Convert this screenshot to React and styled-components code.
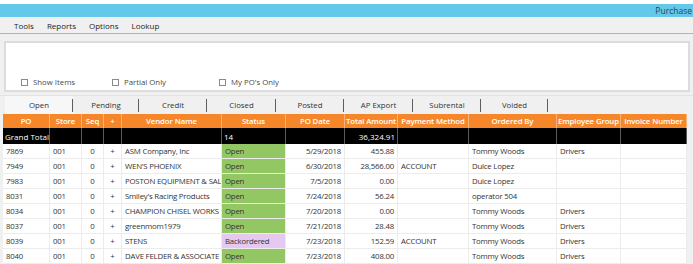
import React from "react";
import styled, { createGlobalStyle } from "styled-components";

const Global = createGlobalStyle`
  html, body { margin: 0; padding: 0; background: #ffffff; }
  body { font-family: "Open Sans", "Noto Sans", sans-serif; }
  * { box-sizing: border-box; }
`;

const Window = styled.div`
  width: 693px;
  height: 264px;
  overflow: hidden;
  background: #f0f0f0;
  border-top: 4px solid #ffffff;
  display: flex;
  flex-direction: column;
  font-size: 7.5px;
  color: #2b2b2b;
`;

const TitleBar = styled.div`
  height: 13px;
  flex: none;
  background: #64c9e9;
  display: flex;
  align-items: center;
  justify-content: flex-end;
  padding-right: 1px;
  white-space: nowrap;
  overflow: hidden;
  font-size: 8.5px;
  color: #2e4454;
`;

const MenuBar = styled.div`
  height: 17px;
  flex: none;
  display: flex;
  align-items: center;
  gap: 13px;
  padding: 1px 0 0 14px;
  font-size: 8px;
  color: #1e1e1e;
  border-bottom: 1px solid #b4b4b4;
`;

const FilterPanel = styled.div`
  margin: 7px 3px 0 4px;
  height: 51px;
  flex: none;
  background: #ffffff;
  border: 2px solid #dcdcdc;
  display: flex;
  align-items: flex-end;
  padding: 0 0 3px 15px;
`;

const CheckItem = styled.label`
  display: flex;
  align-items: center;
  gap: 5px;
  width: ${(p) => p.$w}px;
  color: #4a4a4a;
  font-size: 7.8px;
`;

const Box = styled.span`
  width: 7px;
  height: 7px;
  border: 1px solid #8a8a8a;
  background: #fff;
  flex: none;
`;

const TabStrip = styled.div`
  margin-top: 3px;
  height: 19px;
  flex: none;
  display: flex;
  align-items: stretch;
  padding-left: 5px;
  border-top: 1px solid #e2e2e2;
`;

const Tab = styled.div`
  width: ${(p) => p.$w}px;
  display: flex;
  align-items: center;
  justify-content: center;
  font-size: 7.8px;
  color: #333;
  background: ${(p) => (p.$active ? "#f7f7f7" : "transparent")};
  position: relative;
  &::after {
    content: "";
    position: absolute;
    right: 0;
    top: 3px;
    bottom: 2px;
    width: 1px;
    background: #5e5e5e;
  }
`;

const Grid = styled.div`
  margin-left: 3px;
  width: 684px;
  display: grid;
  grid-template-columns: 47px 32px 22px 18px 100px 64px 59px 53px 71px 88px 64px 66px;
  background: #ffffff;
`;

const HeadCell = styled.div`
  height: 14px;
  background: #f6862a;
  color: #ffffff;
  font-weight: 600;
  font-size: 7.8px;
  letter-spacing: -0.1px;
  display: flex;
  align-items: center;
  justify-content: center;
  white-space: nowrap;
  overflow: hidden;
  border-right: 1px solid #f9b277;
`;

const TotalCell = styled.div`
  height: 16px;
  background: #000000;
  color: #ffffff;
  font-size: 8px;
  display: flex;
  align-items: center;
  justify-content: ${(p) => (p.$right ? "flex-end" : "flex-start")};
  padding: 0 2px;
  border-right: 1px solid #5a5a5a;
  white-space: nowrap;
`;

const Cell = styled.div`
  height: 15px;
  display: flex;
  align-items: center;
  justify-content: ${(p) =>
    p.$align === "right" ? "flex-end" : p.$align === "center" ? "center" : "flex-start"};
  padding: 0 3px;
  white-space: nowrap;
  overflow: hidden;
  font-size: 7.8px;
  letter-spacing: -0.2px;
  color: #333333;
  background: ${(p) =>
    p.$status === "Open" ? "#93c764" : p.$status === "Backordered" ? "#e6c9f0" : "#ffffff"};
  border-right: 1px solid #ececec;
  border-bottom: 1px solid #ececec;
`;

const columns = [
  "PO",
  "Store",
  "Seq",
  "+",
  "Vendor Name",
  "Status",
  "PO Date",
  "Total Amount",
  "Payment Method",
  "Ordered By",
  "Employee Group",
  "Invoice Number",
];

const rows = [
  ["7869", "ASM Company, Inc", "Open", "5/29/2018", "455.88", "", "Tommy Woods", "Drivers"],
  ["7949", "WEN'S PHOENIX", "Open", "6/30/2018", "28,566.00", "ACCOUNT", "Dulce Lopez", ""],
  ["7983", "POSTON EQUIPMENT & SAL", "Open", "7/5/2018", "0.00", "", "Dulce Lopez", ""],
  ["8031", "Smiley's Racing Products", "Open", "7/24/2018", "56.24", "", "operator 504", ""],
  ["8034", "CHAMPION CHISEL WORKS", "Open", "7/20/2018", "0.00", "", "Tommy Woods", "Drivers"],
  ["8037", "greenmom1979", "Open", "7/21/2018", "28.48", "", "Tommy Woods", "Drivers"],
  ["8039", "STENS", "Backordered", "7/23/2018", "152.59", "ACCOUNT", "Tommy Woods", "Drivers"],
  ["8040", "DAVE FELDER & ASSOCIATE", "Open", "7/23/2018", "408.00", "", "Tommy Woods", "Drivers"],
];

const tabs = [
  ["Open", 68],
  ["Pending", 66],
  ["Credit", 68],
  ["Closed", 69],
  ["Posted", 68],
  ["AP Export", 69],
  ["Subrental", 68],
  ["Voided", 67],
];

export default function App() {
  return (
    <>
      <Global />
      <Window>
        <TitleBar>Purchase</TitleBar>
        <MenuBar>
          <span>Tools</span>
          <span>Reports</span>
          <span>Options</span>
          <span>Lookup</span>
        </MenuBar>
        <FilterPanel>
          <CheckItem $w={91}>
            <Box />
            Show Items
          </CheckItem>
          <CheckItem $w={107}>
            <Box />
            Partial Only
          </CheckItem>
          <CheckItem $w={100}>
            <Box />
            My PO's Only
          </CheckItem>
        </FilterPanel>
        <TabStrip>
          {tabs.map(([t, w], i) => (
            <Tab key={t} $w={w} $active={i === 0}>
              {t}
            </Tab>
          ))}
        </TabStrip>
        <Grid>
          {columns.map((c) => (
            <HeadCell key={c}>{c}</HeadCell>
          ))}
          <TotalCell>Grand Total</TotalCell>
          <TotalCell />
          <TotalCell />
          <TotalCell />
          <TotalCell />
          <TotalCell>14</TotalCell>
          <TotalCell />
          <TotalCell $right>36,324.91</TotalCell>
          <TotalCell />
          <TotalCell />
          <TotalCell />
          <TotalCell />
          {rows.map((r) => (
            <React.Fragment key={r[0]}>
              <Cell>{r[0]}</Cell>
              <Cell>001</Cell>
              <Cell $align="center">0</Cell>
              <Cell $align="center">+</Cell>
              <Cell>{r[1]}</Cell>
              <Cell $status={r[2]}>{r[2]}</Cell>
              <Cell $align="right">{r[3]}</Cell>
              <Cell $align="right">{r[4]}</Cell>
              <Cell>{r[5]}</Cell>
              <Cell>{r[6]}</Cell>
              <Cell>{r[7]}</Cell>
              <Cell />
            </React.Fragment>
          ))}
        </Grid>
      </Window>
    </>
  );
}
